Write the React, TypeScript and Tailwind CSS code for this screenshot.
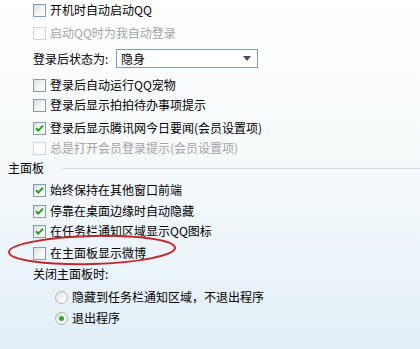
import React from 'react';

const Check: React.FC<{ checked?: boolean; disabled?: boolean }> = ({ checked, disabled }) => (
  <span
    className={`flex h-[13px] w-[13px] shrink-0 items-center justify-center border ${
      disabled
        ? 'border-[#c9d6df] bg-[#fbfcfd]'
        : 'border-[#7f9db9] bg-gradient-to-br from-[#dcdcd6] via-[#f4f4f1] to-white'
    }`}
  >
    {checked && (
      <svg width="9" height="9" viewBox="0 0 9 9">
        <path d="M1 4.2 L3.3 6.6 L8 1.6" fill="none" stroke="#21a121" strokeWidth="2" />
      </svg>
    )}
  </span>
);

const CheckRow: React.FC<{ label: string; checked?: boolean; disabled?: boolean; className?: string }> = ({
  label,
  checked,
  disabled,
  className = '',
}) => (
  <div className={`flex h-[20px] items-center pl-[33px] ${className}`}>
    <Check checked={checked} disabled={disabled} />
    <span className={`ml-[4px] ${disabled ? 'text-[#a3a3a3]' : 'text-black'}`}>{label}</span>
  </div>
);

const Radio: React.FC<{ label: string; checked?: boolean; className?: string }> = ({ label, checked, className = '' }) => (
  <div className={`flex h-[20px] items-center pl-[55px] ${className}`}>
    <span className="flex h-[13px] w-[13px] shrink-0 items-center justify-center rounded-full border border-[#a6b6c4] bg-gradient-to-br from-[#dcdcd6] via-[#f4f4f1] to-white">
      {checked && <span className="h-[5px] w-[5px] rounded-full bg-[#2ea42e]" />}
    </span>
    <span className="ml-[4px] text-black">{label}</span>
  </div>
);

export default function App() {
  return (
    <div
      className="relative h-[349px] w-[420px] overflow-hidden bg-gradient-to-b from-white via-[#f4f9fb] to-[#e2eff7] text-[12px] leading-none"
      style={{ fontFamily: '"Noto Sans CJK SC", "Noto Sans", sans-serif' }}
    >
      <div className="flex flex-col">
        <CheckRow label="开机时自动启动QQ" className="h-[16px]" />
        <CheckRow label="启动QQ时为我自动登录" disabled className="mt-[3px]" />

        <div className="mt-[6px] flex h-[19px] items-center pl-[33px]">
          <span className="w-[83px] text-black">登录后状态为:</span>
          <div className="flex h-[19px] w-[142px] items-center justify-between border border-[#7f9db9] bg-white pl-[4px] pr-[6px]">
            <span className="text-black">隐身</span>
            <svg width="8" height="5" viewBox="0 0 8 5">
              <path d="M0 0 H8 L4 5 Z" fill="#3f5068" />
            </svg>
          </div>
        </div>

        <CheckRow label="登录后自动运行QQ宠物" className="mt-[7px]" />
        <CheckRow label="登录后显示拍拍待办事项提示" />
        <CheckRow label="登录后显示腾讯网今日要闻(会员设置项)" checked className="mt-[3px]" />
        <CheckRow label="总是打开会员登录提示(会员设置项)" disabled />

        <div className="flex h-[20px] items-center pl-[8px]">
          <span className="text-black">主面板</span>
          <span className="ml-[18px] h-px flex-1 bg-[#cfdbe3]" />
        </div>

        <CheckRow label="始终保持在其他窗口前端" checked className="mt-[2px]" />
        <CheckRow label="停靠在桌面边缘时自动隐藏" checked className="mt-[1px]" />
        <CheckRow label="在任务栏通知区域显示QQ图标" checked />
        <CheckRow label="在主面板显示微博" className="mt-[2px]" />

        <div className="mt-[1px] flex h-[20px] items-center pl-[33px] text-black">关闭主面板时:</div>

        <Radio label="隐藏到任务栏通知区域，不退出程序" className="mt-[3px]" />
        <Radio label="退出程序" checked className="mt-[1px]" />
      </div>

      <svg className="pointer-events-none absolute left-0 top-0" width="420" height="349">
        <ellipse
          cx="92"
          cy="250"
          rx="83"
          ry="14"
          fill="none"
          stroke="#c4262b"
          strokeWidth="2"
          transform="rotate(-1.5 92 250)"
        />
      </svg>
    </div>
  );
}
